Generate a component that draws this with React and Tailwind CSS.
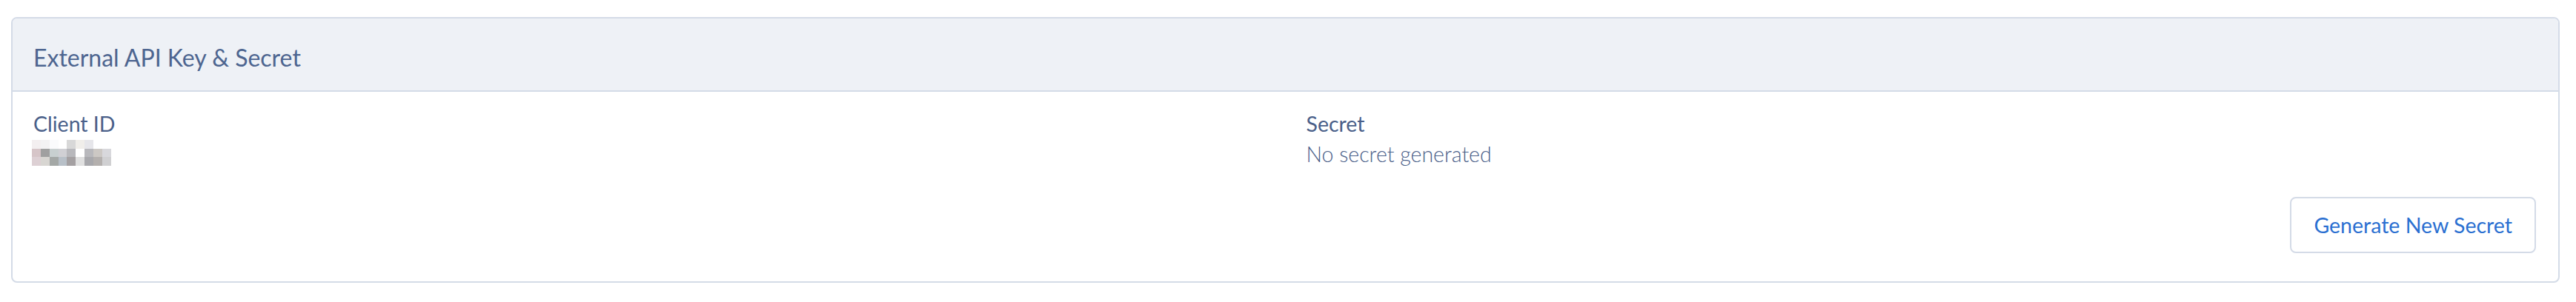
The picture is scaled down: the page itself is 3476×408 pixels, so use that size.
import React from "react";

const pixRows = [
  ["#f3eff0", "#f3f2f3", "#fafbfc", "#ffffff", "#d8d8d8", "#f0eeea", "#e6e6ea", "#ffffff", "#ffffff"],
  ["#d6c5c8", "#a0a0a0", "#c8d0d0", "#d0d0d4", "#b8b8bc", "#ffffff", "#b8b8bc", "#ccc8c4", "#d8d8dc"],
  ["#ddd0d4", "#d8d6d2", "#a4a8a6", "#b8c0c8", "#a4a0a2", "#e0e0e0", "#a8a8ac", "#b4b0ae", "#d0d0d2"],
];

function Pixelated() {
  return (
    <div className="flex flex-col">
      {pixRows.map((row, i) => (
        <div key={i} className="flex h-[11.67px]">
          {row.map((c, j) => (
            <div key={j} className="w-[11.85px] h-full" style={{ backgroundColor: c }} />
          ))}
        </div>
      ))}
    </div>
  );
}

export default function App() {
  return (
    <div className="w-[3476px] h-[408px] bg-white pt-[23px] pl-[15px] pr-[22px] font-['Lato',sans-serif]">
      <div className="border-2 border-[#d4dbe7] rounded-[8px] overflow-hidden bg-white">
        <div className="h-[99px] bg-[#eef1f6] border-b-2 border-[#d4dbe7] pl-[28px] pt-[33px]">
          <h2 className="text-[32px] leading-[40px] text-[#4d6590] font-normal">External API Key &amp; Secret</h2>
        </div>
        <div className="pt-[23px] pb-[38px]">
          <div className="grid grid-cols-2">
            <div className="px-[28px]">
              <div className="text-[28.5px] leading-[41px] text-[#4a6089]">Client ID</div>
              <div className="mt-[1px] -ml-[2px]">
                <Pixelated />
              </div>
            </div>
            <div className="px-[28px]">
              <div className="text-[28.5px] leading-[41px] text-[#4a6089]">Secret</div>
              <div className="text-[28.5px] leading-[41px] text-[#4a6089] font-light">No secret generated</div>
            </div>
          </div>
          <div className="flex justify-end mt-[37px] pr-[30px]">
            <button className="h-[76px] px-[30px] border-2 border-[#d4dbe7] rounded-[8px] bg-white text-[28.5px] text-[#2a6fd1] font-['Lato',sans-serif]">
              Generate New Secret
            </button>
          </div>
        </div>
      </div>
    </div>
  );
}
